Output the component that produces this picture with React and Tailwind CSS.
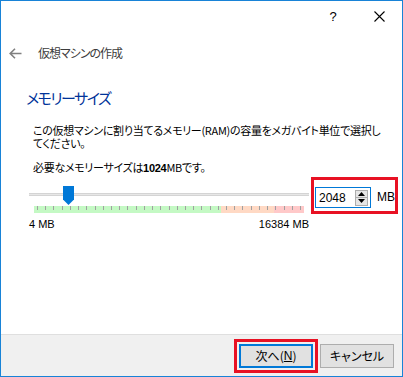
import React from 'react';

const jp = "font-['Noto_Sans_CJK_JP','Noto_Sans',sans-serif] [font-feature-settings:'palt']";

function Thumb() {
  return (
    <svg width="11" height="19" viewBox="0 0 11 19" className="absolute top-0 left-[34px]">
      <path d="M0 0 H11 V13.5 L5.5 19 L0 13.5 Z" fill="#0078d7" />
    </svg>
  );
}

function TickBand() {
  const ticks = Array.from({ length: 33 });
  return (
    <div className="relative mx-[5px] mt-[2px] h-[7px] flex">
      <div className="w-[187px] bg-[#c4f9c4]" />
      <div className="w-[53px] bg-[#ffd9c4]" />
      <div className="flex-1 bg-[#ffc9c9]" />
      {/* tick marks over the colour band */}
      <div className="absolute inset-x-[3px] top-0 flex justify-between">
        {ticks.map((_, i) => (
          <span key={i} className="w-px h-[4px] bg-[#a0a0a0]" />
        ))}
      </div>
    </div>
  );
}

function Spinner() {
  return (
    <div className="flex flex-col w-[13px] h-[16px] border border-[#adadad] bg-[#e5e5e5]">
      <div className="flex-1 flex items-center justify-center border-b border-[#adadad]">
        <svg width="7" height="4" viewBox="0 0 7 4"><path d="M3.5 0 L7 4 H0 Z" fill="#000" /></svg>
      </div>
      <div className="flex-1 flex items-center justify-center">
        <svg width="7" height="4" viewBox="0 0 7 4"><path d="M0 0 H7 L3.5 4 Z" fill="#000" /></svg>
      </div>
    </div>
  );
}

export default function App() {
  return (
    <div className={`w-[403px] h-[377px] border border-[#1883d7] bg-white flex flex-col text-black ${jp}`}>
      {/* Title bar */}
      <div className="h-[30px] flex justify-end items-center">
        <div className="w-[46px] flex justify-center text-[13px] leading-none font-['Liberation_Sans',sans-serif]">?</div>
        <div className="w-[46px] flex justify-center">
          <svg width="11" height="11" viewBox="0 0 11 11">
            <path d="M0.5 0.5 L10.5 10.5 M10.5 0.5 L0.5 10.5" stroke="#000" strokeWidth="1.1" />
          </svg>
        </div>
      </div>

      {/* Wizard nav */}
      <div className="h-[44px] flex items-center pl-[8px]">
        <svg width="13" height="11" viewBox="0 0 13 11">
          <path d="M6 0.8 L1.2 5.5 L6 10.2 M1.2 5.5 H12.5" stroke="#808080" strokeWidth="1.6" fill="none" />
        </svg>
        <span className="ml-[16px] text-[12px] leading-[14px] tracking-[-1px] text-[#3c3c3c]">仮想マシンの作成</span>
      </div>

      {/* Content */}
      <div className="flex-1 pl-[25px]">
        <h1 className="mt-[13px] text-[15px] leading-[20px] tracking-[-1.5px] text-[#003399] font-normal">メモリーサイズ</h1>
        <p className="mt-[16px] ml-[7px] text-[11px] leading-[13px] tracking-[-0.3px] whitespace-nowrap">
          この仮想マシンに割り当てるメモリー(RAM)の容量をメガバイト単位で選択し<br />てください。
        </p>
        <p className="mt-[11px] ml-[7px] text-[11px] leading-[13px] tracking-[-0.3px]">
          必要なメモリーサイズは<span className="font-bold font-['Liberation_Sans',sans-serif]">1024</span>MBです。
        </p>

        <div className="mt-[2px] ml-[3px] flex">
          {/* Slider */}
          <div className="w-[280px] pt-[9px]">
            <div className="relative h-[18px]">
              <div className="pt-[7px]">
                <div className="h-[3px] bg-[#e7e7e7] border-y border-[#d4d4d4]" />
              </div>
              <Thumb />
            </div>
            <TickBand />
            <div className="mt-[5px] flex justify-between text-[11px] leading-[12px] font-['Liberation_Sans',sans-serif]">
              <span>4 MB</span>
              <span>16384 MB</span>
            </div>
          </div>

          {/* Spin box */}
          <div className="ml-[2px] w-[87px] h-[37px] border-[3px] border-[#e81123] pl-[1px] pt-[7px] flex items-start">
            <div className="w-[56px] h-[21px] border border-[#0078d7] bg-white flex items-center justify-between pl-[3px] pr-[2px]">
              <span className="text-[12px] leading-none font-['Liberation_Sans',sans-serif]">2048</span>
              <Spinner />
            </div>
            <span className="ml-[6px] mt-[3px] text-[12px] leading-[14px] font-['Liberation_Sans',sans-serif]">MB</span>
          </div>
        </div>
      </div>

      {/* Footer */}
      <div className="h-[42px] border-t border-[#dfdfdf] bg-[#f0f0f0] flex justify-end items-center pr-[8px]">
        <div className="border-[3px] border-[#e81123] p-[2px]">
          <button className="w-[74px] h-[24px] bg-[#e1e1e1] border-2 border-[#0078d7] text-[12px] leading-none flex items-center justify-center">
            次へ(<span className="underline font-['Liberation_Sans',sans-serif]">N</span>)
          </button>
        </div>
        <button className="ml-[2px] w-[74px] h-[24px] bg-[#e1e1e1] border border-[#adadad] text-[12px] leading-none flex items-center justify-center">
          キャンセル
        </button>
      </div>
    </div>
  );
}
